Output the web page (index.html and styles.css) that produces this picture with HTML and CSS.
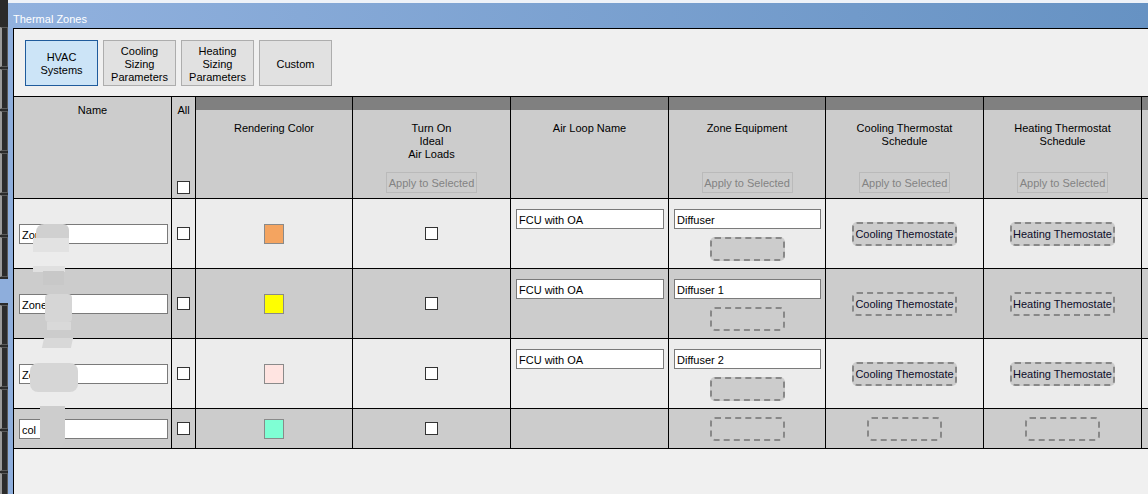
FILE: index.html
```html
<!DOCTYPE html>
<html>
<head>
<meta charset="utf-8">
<title>Thermal Zones</title>
<link rel="stylesheet" href="styles.css">
</head>
<body>
<div class="screen">
  <div class="side">
    <div class="seg"></div><div class="seg"></div><div class="seg"></div><div class="seg"></div><div class="seg"></div><div class="seg"></div>
    <div class="gap"></div>
    <div class="seg"></div><div class="seg"></div><div class="seg"></div><div class="seg"></div><div class="seg"></div>
  </div>
  <div class="frame">
    <div class="topline"></div>
    <div class="titlebar">Thermal Zones</div>
    <div class="panel">
      <div class="tabs">
        <div class="tab active">HVAC<br>Systems</div>
        <div class="tab">Cooling<br>Sizing<br>Parameters</div>
        <div class="tab">Heating<br>Sizing<br>Parameters</div>
        <div class="tab">Custom</div>
      </div>
      <div class="grid">
        <!-- header -->
        <div class="c h plain"><div class="t">Name</div></div>
        <div class="c h plain"><div class="t">All</div><div class="cb"></div></div>
        <div class="c h"><div class="band"></div><div class="t">Rendering Color</div></div>
        <div class="c h"><div class="band"></div><div class="t">Turn On<br>Ideal<br>Air Loads</div><div class="apply">Apply to Selected</div></div>
        <div class="c h"><div class="band"></div><div class="t">Air Loop Name</div></div>
        <div class="c h"><div class="band"></div><div class="t">Zone Equipment</div><div class="apply">Apply to Selected</div></div>
        <div class="c h"><div class="band"></div><div class="t">Cooling Thermostat<br>Schedule</div><div class="apply">Apply to Selected</div></div>
        <div class="c h"><div class="band"></div><div class="t">Heating Thermostat<br>Schedule</div><div class="apply">Apply to Selected</div></div>
        <div class="c h"><div class="band"></div></div>

        <!-- row 1 -->
        <div class="c light namecell"><div class="in">Zon</div></div>
        <div class="c light center"><div class="cb"></div></div>
        <div class="c light center"><div class="sw sw-orange"></div></div>
        <div class="c light center"><div class="cb"></div></div>
        <div class="c light topcell"><div class="in">FCU with OA</div></div>
        <div class="c light zone"><div class="in">Diffuser</div><div class="drop"></div></div>
        <div class="c light center"><div class="drop wide">Cooling Themostate</div></div>
        <div class="c light center"><div class="drop wide">Heating Themostate</div></div>
        <div class="c light"></div>

        <!-- row 2 -->
        <div class="c dark namecell"><div class="in">Zone</div></div>
        <div class="c dark center"><div class="cb"></div></div>
        <div class="c dark center"><div class="sw sw-yellow"></div></div>
        <div class="c dark center"><div class="cb"></div></div>
        <div class="c dark topcell"><div class="in">FCU with OA</div></div>
        <div class="c dark zone"><div class="in">Diffuser 1</div><div class="drop"></div></div>
        <div class="c dark center"><div class="drop wide">Cooling Themostate</div></div>
        <div class="c dark center"><div class="drop wide">Heating Themostate</div></div>
        <div class="c dark"></div>

        <!-- row 3 -->
        <div class="c light namecell"><div class="in">Zo</div></div>
        <div class="c light center"><div class="cb"></div></div>
        <div class="c light center"><div class="sw sw-rose"></div></div>
        <div class="c light center"><div class="cb"></div></div>
        <div class="c light topcell"><div class="in">FCU with OA</div></div>
        <div class="c light zone"><div class="in">Diffuser 2</div><div class="drop"></div></div>
        <div class="c light center"><div class="drop wide">Cooling Themostate</div></div>
        <div class="c light center"><div class="drop wide">Heating Themostate</div></div>
        <div class="c light"></div>

        <!-- row 4 -->
        <div class="c dark namecell"><div class="in">col</div></div>
        <div class="c dark center"><div class="cb"></div></div>
        <div class="c dark center"><div class="sw sw-aqua"></div></div>
        <div class="c dark center"><div class="cb"></div></div>
        <div class="c dark"></div>
        <div class="c dark center"><div class="drop"></div></div>
        <div class="c dark center"><div class="drop"></div></div>
        <div class="c dark center"><div class="drop"></div></div>
        <div class="c dark"></div>
      </div>
    </div>
  </div>

  <!-- redaction smudges lying over the name column -->
  <div class="blob b1"></div>
  <div class="blob b2"></div>
  <div class="blob b3"></div>
  <div class="blob b4"></div>
  <div class="blob b5"></div>
  <div class="blob b6"></div>
  <div class="blob b7"></div>
  <div class="blob b8"></div>
  <div class="blob b9"></div>
</div>
</body>
</html>
```

FILE: styles.css
```css
* { box-sizing: border-box; }
html, body { margin: 0; padding: 0; }
body {
  width: 1148px;
  height: 494px;
  overflow: hidden;
  font-family: "Liberation Sans", Arial, sans-serif;
  font-size: 11px;
  color: #000;
  background: #f0f0f0;
}
.screen {
  position: relative;
  display: flex;
  width: 1148px;
  height: 494px;
  overflow: hidden;
}

/* left dark strip */
.side {
  width: 8px;
  flex: none;
  background: #2b2b2b;
  display: flex;
  flex-direction: column;
  padding-top: 27px;
  gap: 2px;
}
.seg {
  height: 40px;
  flex: none;
  border: 1px solid #5a5a5a;
  border-left: 2px solid #9a9a9a;
  background: #2b2b2b;
}
.gap {
  height: 24px;
  flex: none;
  background: #8eaedc;
}

/* window frame */
.frame {
  flex: 1;
  display: flex;
  flex-direction: column;
  background: #8eaedc;
  min-width: 0;
}
.topline { height: 3px; background: #eef2f8; flex: none; }
.titlebar {
  height: 25px;
  flex: none;
  padding: 10px 0 0 5px;
  line-height: 13px;
  color: #fff;
  background: linear-gradient(90deg, #91b1de, #6692c3);
}
.panel {
  flex: 1;
  margin-left: 5px;
  border-left: 1px solid #000;
  border-top: 1px solid #000;
  background: #f0f0f0;
  overflow: hidden;
}

/* tab buttons */
.tabs {
  display: flex;
  gap: 5px;
  padding: 11px 0 0 11px;
}
.tab {
  width: 73px;
  height: 46px;
  display: flex;
  align-items: center;
  justify-content: center;
  text-align: center;
  line-height: 13px;
  padding-top: 2px;
  background: #e1e1e1;
  border: 1px solid #adadad;
}
.tab.active {
  background: #cce4f7;
  border-color: #1f5b9c;
}

/* grid table */
.grid {
  margin-top: 10px;
  display: grid;
  grid-template-columns: 158px 24px 157px 158px 158px 157px 158px 158px 158px;
  grid-template-rows: 102px 70px 70px 70px 40px;
  border-top: 1px solid #000;
  width: max-content;
}
.c {
  border-right: 1px solid #000;
  border-bottom: 1px solid #000;
}
.h {
  background: #cccccc;
  display: flex;
  flex-direction: column;
  align-items: center;
  text-align: center;
  line-height: 13px;
}
.band {
  align-self: stretch;
  height: 13px;
  flex: none;
  background: #808080;
}
.h .t { margin-top: 12px; }
.h.plain .t { margin-top: 7px; }
.apply {
  margin-top: auto;
  margin-bottom: 5px;
  width: 91px;
  height: 21px;
  padding-top: 1px;
  border: 1px solid #bababa;
  color: #838383;
  display: flex;
  align-items: center;
  justify-content: center;
}
.cb {
  width: 13px;
  height: 13px;
  border: 1px solid #333;
  background: #fff;
}
.h .cb { margin-top: auto; margin-bottom: 4px; }

.light { background: #ececec; }
.dark { background: #cccccc; }

.namecell {
  display: flex;
  align-items: center;
  padding-left: 5px;
}
.in {
  width: 149px;
  height: 20px;
  border: 1px solid #7a7a7a;
  background: #fff;
  padding: 1px 0 0 2px;
  line-height: 18px;
  white-space: nowrap;
  overflow: hidden;
}
.center {
  display: flex;
  align-items: center;
  justify-content: center;
}
.sw {
  width: 20px;
  height: 20px;
  border: 1px solid #8a8a8a;
}
.sw-orange { background: #f4a460; }
.sw-yellow { background: #ffff00; }
.sw-rose { background: #ffe4e1; }
.sw-aqua { background: #7fffd4; }

.topcell { padding: 10px 0 0 5px; }
.topcell .in { width: 148px; }
.zone {
  display: flex;
  flex-direction: column;
  align-items: center;
  padding-top: 10px;
}
.zone .in {
  align-self: flex-start;
  margin-left: 5px;
  width: 147px;
}
.drop {
  width: 75px;
  height: 24px;
  border: 2px dashed #888888;
  border-radius: 5px;
  background: #cccccc;
  display: flex;
  align-items: center;
  justify-content: center;
  white-space: nowrap;
  color: #0c0c2a;
  padding-top: 1px;
}
.zone .drop { margin-top: 8px; }
.drop.wide { width: auto; padding: 1px 1px 0; }

/* redaction smudges */
.blob { position: absolute; }
.b1 { left: 36px; top: 224px; width: 33px; height: 14px; background: #d0d0d0; border-radius: 8px 6px 0 0; }
.b2 { left: 33px; top: 238px; width: 36px; height: 14px; background: #e2e2e2; }
.b3 { left: 33px; top: 266px; width: 32px; height: 6px; background: #e0e0e0; }
.b4 { left: 43px; top: 271px; width: 21px; height: 14px; background: #c8c8c8; }
.b5 { left: 45px; top: 294px; width: 27px; height: 28px; background: #d6d6d6; border-radius: 4px; }
.b6 { left: 47px; top: 322px; width: 24px; height: 8px; background: #d9d9d9; }
.b7 { left: 43px; top: 338px; width: 29px; height: 10px; background: #d8d8d8; transform: skewX(-12deg); }
.b8 { left: 30px; top: 363px; width: 48px; height: 29px; background: #d6d6d6; border-radius: 8px; }
.b9 { left: 40px; top: 406px; width: 25px; height: 42px; background: #cdcdcd; border-radius: 0 0 8px 8px; }
```
